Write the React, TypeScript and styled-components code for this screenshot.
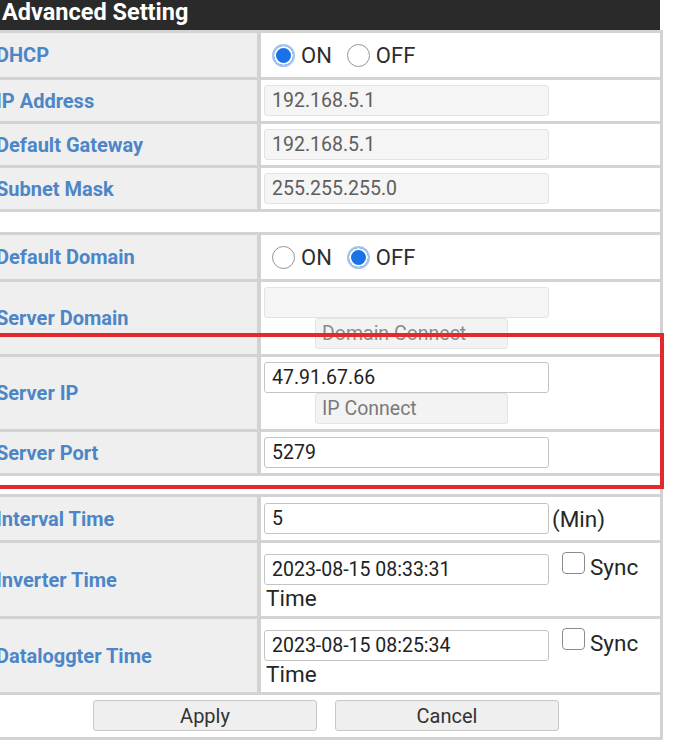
import React from "react";
import styled, { createGlobalStyle } from "styled-components";

const Global = createGlobalStyle`
  html, body { margin: 0; padding: 0; background: #ffffff; overflow: hidden; }
  body { font-family: Roboto, "Noto Sans", "Liberation Sans", Arial, sans-serif; }
  * { box-sizing: border-box; }
`;

const Page = styled.div`
  position: relative;
  width: 671px;
  margin-left: -8px;
`;

const Header = styled.div`
  height: 30px;
  margin-right: 3px;
  padding: 0 0 5px 10px;
  line-height: 25px;
  background: #2a2a2a;
  color: #ffffff;
  font-size: 23.5px;
  font-weight: 700;
  white-space: nowrap;
`;

const Grid = styled.div`
  display: grid;
  grid-template-columns: 265px 399px;
  column-gap: 4px;
  row-gap: 3px;
  padding: 3px 3px 3px 0;
  background: #d3d3d3;
`;

const Label = styled.div`
  display: flex;
  align-items: center;
  padding-left: 4px;
  background: #efefef;
  color: #4d86c6;
  font-size: 20px;
  font-weight: 700;
  white-space: nowrap;
`;

const Value = styled.div`
  display: flex;
  flex-direction: column;
  align-items: flex-start;
  padding: 5px 0 5px 3px;
  background: #ffffff;
`;

const Spacer = styled.div<{ $h: number }>`
  grid-column: 1 / -1;
  height: ${(p) => p.$h}px;
  background: #ffffff;
`;

const Field = styled.input<{ $off?: boolean }>`
  width: 285px;
  height: 31px;
  margin: 0;
  padding: 0 7px;
  border: 1px solid ${(p) => (p.$off ? "#e3e3e3" : "#c4c4c4")};
  border-radius: 3px;
  background: ${(p) => (p.$off ? "#f5f5f5" : "#ffffff")};
  color: ${(p) => (p.$off ? "#5e5e5e" : "#222222")};
  font: 400 19.5px Roboto, "Noto Sans", sans-serif;
  outline: none;
`;

const ConnectButton = styled.button<{ $tone: string }>`
  width: 193px;
  height: 31px;
  margin: 0 0 0 51px;
  padding: 0 0 0 6px;
  border: 1px solid #e4e4e4;
  border-radius: 3px;
  background: #f3f3f3;
  color: ${(p) => p.$tone};
  text-align: left;
  font: 400 19.5px Roboto, "Noto Sans", sans-serif;
`;

const Choices = styled.div`
  display: flex;
  align-items: center;
  gap: 15px;
  height: 34px;
  margin-left: 8px;
`;

const Choice = styled.label`
  display: inline-flex;
  align-items: center;
  gap: 6px;
  color: #2e2e2e;
  font-size: 22px;
`;

const Dot = styled.span<{ $on?: boolean }>`
  display: inline-block;
  width: 23px;
  height: 23px;
  border-radius: 50%;
  border: ${(p) => (p.$on ? "2px solid #a6c4ea" : "1.5px solid #959595")};
  background: ${(p) => (p.$on ? "#1a73e6" : "#ffffff")};
  box-shadow: ${(p) => (p.$on ? "inset 0 0 0 2px #ffffff" : "none")};
`;

const InlineLine = styled.div`
  display: flex;
  align-items: center;
  height: 33px;
`;

const BigText = styled.span`
  color: #262626;
  font-size: 22.5px;
  line-height: 26px;
  white-space: nowrap;
`;

const Unit = styled(BigText)`
  margin-left: 3px;
`;

const TimeLine = styled.div`
  display: flex;
  align-items: flex-start;
  padding-top: 6px;
`;

const Check = styled.span`
  display: inline-block;
  width: 23px;
  height: 22px;
  margin: -2px 5px 0 13px;
  border: 1.5px solid #8c8c8c;
  border-radius: 4px;
  background: #ffffff;
`;

const Wrapped = styled(BigText)`
  display: block;
  padding-left: 2px;
`;

const ButtonRow = styled.div`
  grid-column: 1 / -1;
  display: flex;
  justify-content: center;
  gap: 18px;
  padding: 5px 0 6px;
  background: #ffffff;
`;

const ActionButton = styled.button`
  width: 224px;
  height: 31px;
  margin: 0;
  padding: 0;
  border: 1px solid #c9c9c9;
  border-radius: 3px;
  background: #efefef;
  color: #333333;
  font: 400 20px Roboto, "Noto Sans", sans-serif;
`;

const Highlight = styled.div`
  position: absolute;
  left: 0;
  top: 333px;
  width: 672px;
  height: 156px;
  border: 4px solid #e3292b;
  pointer-events: none;
`;

function Radios({ on }: { on: boolean }) {
  return (
    <Choices>
      <Choice>
        <Dot $on={on} />
        ON
      </Choice>
      <Choice>
        <Dot $on={!on} />
        OFF
      </Choice>
    </Choices>
  );
}

function TimeValue({ value }: { value: string }) {
  return (
    <Value>
      <TimeLine>
        <Field defaultValue={value} readOnly />
        <Check />
        <BigText>Sync</BigText>
      </TimeLine>
      <Wrapped>Time</Wrapped>
    </Value>
  );
}

export default function App() {
  return (
    <Page>
      <Global />
      <Header>Advanced Setting</Header>
      <Grid>
        <Label>DHCP</Label>
        <Value>
          <Radios on={true} />
        </Value>

        <Label>IP Address</Label>
        <Value>
          <Field $off defaultValue="192.168.5.1" readOnly />
        </Value>

        <Label>Default Gateway</Label>
        <Value>
          <Field $off defaultValue="192.168.5.1" readOnly />
        </Value>

        <Label>Subnet Mask</Label>
        <Value>
          <Field $off defaultValue="255.255.255.0" readOnly />
        </Value>

        <Spacer $h={20} />

        <Label>Default Domain</Label>
        <Value>
          <Radios on={false} />
        </Value>

        <Label>Server Domain</Label>
        <Value>
          <Field $off defaultValue="" readOnly />
          <ConnectButton $tone="#8a8a8a">Domain Connect</ConnectButton>
        </Value>

        <Label>Server IP</Label>
        <Value>
          <Field defaultValue="47.91.67.66" readOnly />
          <ConnectButton $tone="#7a7a7a">IP Connect</ConnectButton>
        </Value>

        <Label>Server Port</Label>
        <Value>
          <Field defaultValue="5279" readOnly />
        </Value>

        <Spacer $h={18} />

        <Label>Interval Time</Label>
        <Value>
          <InlineLine>
            <Field defaultValue="5" readOnly />
            <Unit>(Min)</Unit>
          </InlineLine>
        </Value>

        <Label>Inverter Time</Label>
        <TimeValue value="2023-08-15 08:33:31" />

        <Label>Dataloggter Time</Label>
        <TimeValue value="2023-08-15 08:25:34" />

        <ButtonRow>
          <ActionButton>Apply</ActionButton>
          <ActionButton>Cancel</ActionButton>
        </ButtonRow>
      </Grid>
      <Highlight />
    </Page>
  );
}
